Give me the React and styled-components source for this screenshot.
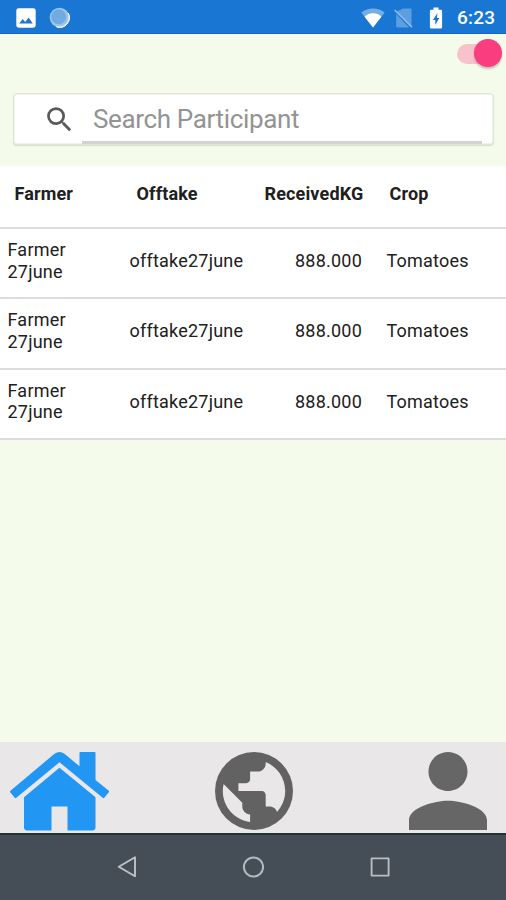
import React from 'react';
import styled, { createGlobalStyle } from 'styled-components';

const GlobalStyle = createGlobalStyle`
  *, *::before, *::after { box-sizing: border-box; }
  body { margin: 0; background: #f4fbeb; }
`;

const Screen = styled.div`
  display: flex;
  flex-direction: column;
  width: 506px;
  height: 900px;
  overflow: hidden;
  background: #f4fbeb;
  color: #202020;
  font-family: Roboto, sans-serif;
`;

const StatusBar = styled.header`
  display: flex;
  flex: none;
  align-items: center;
  justify-content: space-between;
  height: 34px;
  padding: 2px 10px 0 16px;
  background: #1976d3;
  border-bottom: 1px solid #1368bd;
`;

const StatusGroup = styled.div`
  display: flex;
  align-items: center;
  gap: ${(p) => p.$gap}px;
`;

const Icon = styled.svg`
  display: block;
  flex: none;
`;

const Clock = styled.span`
  width: 39px;
  margin-left: 1px;
  color: #fff;
  font-size: 19px;
  font-weight: 500;
  line-height: 22px;
  letter-spacing: 0.2px;
  white-space: nowrap;
`;

const ToggleRow = styled.div`
  display: flex;
  flex: none;
  justify-content: flex-end;
  height: 59px;
  padding: 5px 4px 0 0;
`;

const Toggle = styled.button`
  display: flex;
  align-items: center;
  justify-content: flex-end;
  width: 45px;
  height: 20px;
  margin-top: 5px;
  padding: 0;
  border: 0;
  border-radius: 10px;
  background: linear-gradient(#f8c2cd, #f8c2cd) 0 0 / 36px 20px no-repeat;
`;

const Thumb = styled.span`
  flex: none;
  width: 28px;
  height: 28px;
  margin-top: -2px;
  border-radius: 50%;
  background: #fa3d7e;
  box-shadow: 0 2px 2px rgba(80, 60, 60, 0.3);
`;

const SearchBox = styled.label`
  display: flex;
  flex: none;
  height: 52px;
  margin: 0 12px 21px 13px;
  padding: 0 11px 0 31px;
  border: 1px solid #e0e5d8;
  border-radius: 4px;
  background: #fff;
  box-shadow: 0 1px 1px rgba(0, 0, 0, 0.12), inset 0 0 0 1px #f1f4ee;
`;

const SearchIcon = styled.svg`
  flex: none;
  width: 33px;
  height: 33px;
  margin: 9px 0 0 -2px;
`;

const SearchInput = styled.input`
  flex: 1;
  min-width: 0;
  height: 50px;
  margin-left: 6px;
  padding: 3px 0 0 11px;
  border: 0;
  border-bottom: 3px solid #d2d4d1;
  outline: 0;
  background: transparent;
  color: #202020;
  font: 400 26px Roboto, sans-serif;
  letter-spacing: -0.36px;
  &::placeholder { color: #939393; opacity: 1; }
`;

const Table = styled.div`
  flex: none;
  background: #fff;
`;

const Row = styled.div`
  display: grid;
  grid-template-columns: 122px 120px 122px 1fr;
  align-items: center;
  height: ${(p) => (p.$head ? 63 : 70.33)}px;
  padding: 0 0 ${(p) => (p.$head ? 6 : 5)}px 7.5px;
  border-bottom: 2px solid #dcdcdc;
`;

const HeadCell = styled.div`
  padding-left: ${(p) => p.$inset}px;
  font-size: 18px;
  font-weight: 700;
  line-height: 22px;
  letter-spacing: 0.15px;
  white-space: nowrap;
`;

const Cell = styled.div`
  max-width: ${(p) => (p.$wrap ? '80px' : 'none')};
  padding-right: ${(p) => (p.$numeric ? 9.5 : 0)}px;
  padding-left: ${(p) => p.$inset || 0}px;
  text-align: ${(p) => (p.$numeric ? 'right' : 'left')};
  font-size: 18px;
  line-height: 21.5px;
  letter-spacing: 0.22px;
`;

const Spacer = styled.main`
  flex: 1;
`;

const TabBar = styled.nav`
  display: grid;
  flex: none;
  grid-template-columns: 206px 194px 78px;
  align-items: start;
  height: 91px;
  padding: 10px 0 0 9px;
  background: #e9e7e8;
`;

const Tab = styled.button`
  justify-self: start;
  padding: 0;
  border: 0;
  background: transparent;
`;

const SystemBar = styled.footer`
  display: flex;
  flex: none;
  align-items: center;
  justify-content: space-between;
  height: 67px;
  padding: 0 115px 2px 117px;
  border-top: 2px solid #24332f;
  background: #454d56;
`;

const records = [1, 2, 3].map((id) => ({
  id,
  farmer: 'Farmer 27june',
  offtake: 'offtake27june',
  kg: '888.000',
  crop: 'Tomatoes',
}));

export default function App() {
  return (
    <>
      <GlobalStyle />
      <Screen>
        <StatusBar>
          <StatusGroup $gap={13}>
            <Icon width="20" height="20" viewBox="0 0 20 20">
              <rect x="0.3" y="0.3" width="19.4" height="19.4" rx="2.4" fill="#fff" />
              <path d="M3.2 15.6 6.7 11l2.5 3 3.4-4.6 4.2 6.2z" fill="#1976d3" />
            </Icon>
            <Icon width="21" height="21" viewBox="0 0 21 21">
              <circle cx="10.5" cy="10.5" r="9.8" fill="#9bc5ef" />
              <path d="M19.2 6A10 10 0 0 1 7.5 19.8 9.7 9.7 0 0 0 19.2 6z" fill="#f2fbff" stroke="#f2fbff" />
              <circle cx="9.7" cy="9.7" r="7.5" fill="#72aae2" />
            </Icon>
          </StatusGroup>
          <StatusGroup $gap={9}>
            <Icon width="24" height="20" viewBox="0 0 24 20">
              <path d="M12 19.5.3 4.5a19 19 0 0 1 23.4 0z" fill="#75ade5" />
              <path d="M12 19.5 3.6 8.8C8 4.2 16 4.2 20.4 8.8z" fill="#fff" />
            </Icon>
            <Icon width="19" height="20" viewBox="0 0 19 20">
              <path d="M9 .5h7.5q1 0 1 1v17L2.5 3.7zM2.2 6l13 13.5h-12q-1 0-1-1z" fill="#5d9ee0" />
              <path d="m.7 2 17.2 17.2" stroke="#8dbbe9" strokeWidth="1.7" />
            </Icon>
            <Icon width="25" height="22" viewBox="-2.5 0 25 22">
              <path d="M9 .5h5v2.3h2.4q1.2 0 1.2 1.2v16.2q0 1.2-1.2 1.2H6.6q-1.2 0-1.2-1.2V4q0-1.2 1.2-1.2H9z" fill="#fff" />
              <path d="M13 6 8.4 13h2.4v5l4-7h-2.5z" fill="#1976d3" />
            </Icon>
            <Clock>6:23</Clock>
          </StatusGroup>
        </StatusBar>

        <ToggleRow>
          <Toggle role="switch" aria-checked="true">
            <Thumb />
          </Toggle>
        </ToggleRow>

        <SearchBox>
          <SearchIcon viewBox="0 0 24 24">
            <path
              fill="#5a5a5a"
              d="M15.5 14h-.79l-.28-.27A6.471 6.471 0 0 0 16 9.5 6.5 6.5 0 1 0 9.5 16c1.61 0 3.09-.59 4.23-1.57l.27.28v.79l5 4.99L20.49 19l-4.99-5zm-6 0C7.01 14 5 11.99 5 9.5S7.01 5 9.5 5 14 7.01 14 9.5 11.99 14 9.5 14z"
            />
          </SearchIcon>
          <SearchInput placeholder="Search Participant" />
        </SearchBox>

        <Table>
          <Row $head>
            <HeadCell $inset={7}>Farmer</HeadCell>
            <HeadCell $inset={7}>Offtake</HeadCell>
            <HeadCell $inset={15}>ReceivedKG</HeadCell>
            <HeadCell $inset={18}>Crop</HeadCell>
          </Row>
          {records.map((r) => (
            <Row key={r.id}>
              <Cell $wrap>{r.farmer}</Cell>
              <Cell>{r.offtake}</Cell>
              <Cell $numeric>{r.kg}</Cell>
              <Cell $inset={15}>{r.crop}</Cell>
            </Row>
          ))}
        </Table>

        <Spacer />

        <TabBar>
          <Tab aria-label="Home">
            <Icon width="100" height="80" viewBox="8.5 752 100 80" fill="#2196f3">
              <path d="M10 790.2 54 753.2Q59 749.8 64 753.2L79 765.8V752.5Q79 751.5 80 751.5H94Q95 751.5 95 752.5V779.4L108.3 790.2Q109 791 108.3 791.8L103.8 797.2Q103 798 102.2 797.3L59 761.8 15.8 797.3Q15 798 14.2 797.2L9.7 791.8Q9 791 10 790.2Z" transform="translate(0 .5)" />
              <path d="M59 767.8 95 797.3V827.5Q95 830.5 91.5 830.5H67V806.5H51V830.5H27Q23.5 830.5 23.5 827.5V797.3Z" />
            </Icon>
          </Tab>
          <Tab aria-label="World">
            <Icon width="78" height="78" viewBox="2 2 20 20">
              <circle cx="12" cy="12" r="10" fill="#626262" />
              <path
                fill="#e9e7e8"
                d="M11 19.93C7.05 19.44 4 16.08 4 12C4 11.38 4.08 10.79 4.21 10.21L9 15V16C9 17.1 9.9 18 11 18Z"
              />
              <path
                fill="#e9e7e8"
                d="M17.9 17.39C17.64 16.58 16.9 16 16 16H15V13C15 12.45 14.55 12 14 12H8V10H10C10.55 10 11 9.55 11 9V7H13C14.1 7 15 6.1 15 5V4.59C17.93 5.78 20 8.65 20 12C20 14.08 19.2 15.97 17.9 17.39Z"
              />
            </Icon>
          </Tab>
          <Tab aria-label="Profile">
            <Icon width="78" height="78" viewBox="4 4 16 16" fill="#666">
              <path d="M12 12c2.21 0 4-1.79 4-4s-1.79-4-4-4-4 1.79-4 4 1.79 4 4 4zm0 2c-2.67 0-8 1.34-8 4v2h16v-2c0-2.66-5.33-4-8-4z" />
            </Icon>
          </Tab>
        </TabBar>

        <SystemBar>
          <Icon width="20" height="22" viewBox="0 0 20 22" fill="none" stroke="#bfc3c6" strokeWidth="1.9" strokeLinejoin="round">
            <path d="M18 1.3v19L1.8 10.8z" />
          </Icon>
          <Icon width="22" height="22" viewBox="-0.5 0 22 22" fill="none" stroke="#b2b9bf" strokeWidth="2">
            <circle cx="11" cy="11" r="9.6" />
          </Icon>
          <Icon width="22" height="22" viewBox="0 0 22 22" fill="none" stroke="#b8bec2" strokeWidth="1.9" strokeLinejoin="round">
            <rect x="2.6" y="2.4" width="17" height="17.2" />
          </Icon>
        </SystemBar>
      </Screen>
    </>
  );
}
